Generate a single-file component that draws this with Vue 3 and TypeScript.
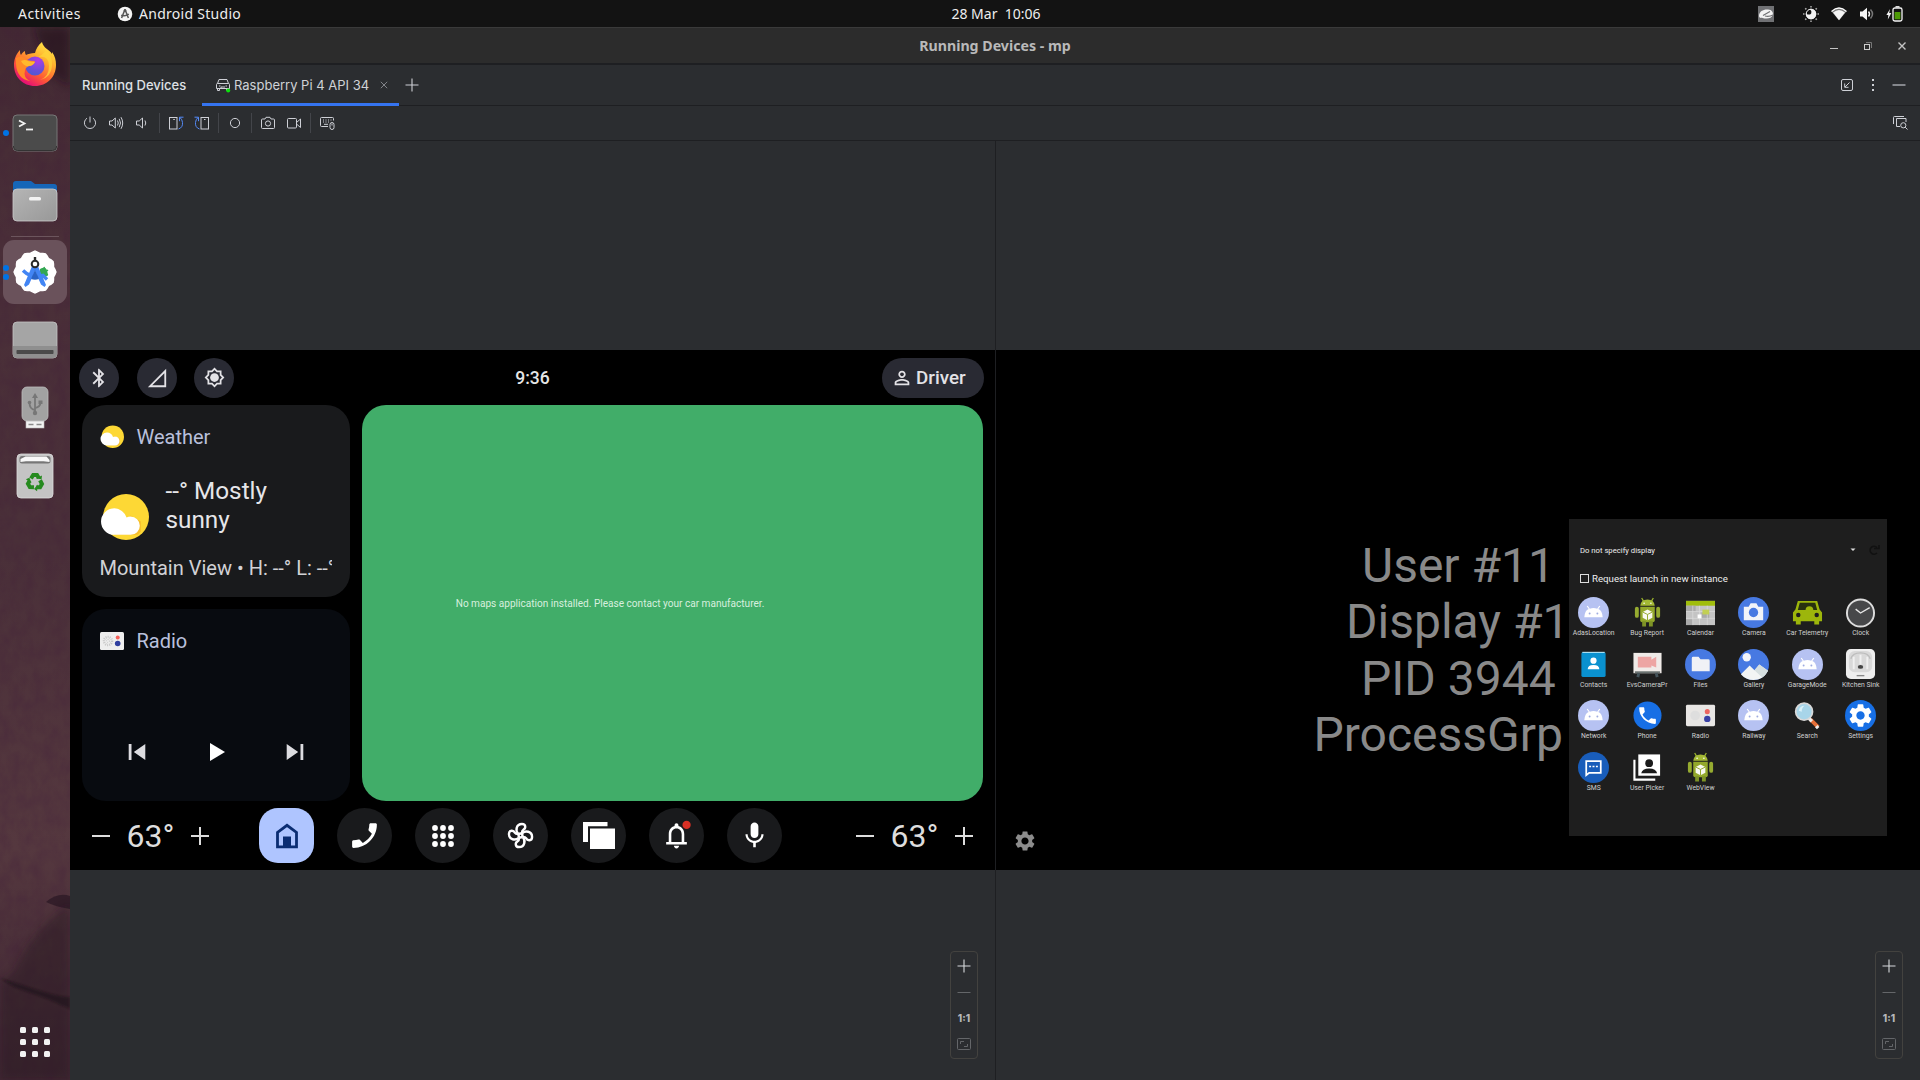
<script setup lang="ts">
interface LauncherApp {
  name: string
  kind: string
}

const apps: LauncherApp[] = [
  { name: 'AdasLocation', kind: 'droid' },
  { name: 'Bug Report', kind: 'robot' },
  { name: 'Calendar', kind: 'calendar' },
  { name: 'Camera', kind: 'camera' },
  { name: 'Car Telemetry', kind: 'car' },
  { name: 'Clock', kind: 'clock' },
  { name: 'Contacts', kind: 'contacts' },
  { name: 'EvsCameraPr', kind: 'evs' },
  { name: 'Files', kind: 'files' },
  { name: 'Gallery', kind: 'gallery' },
  { name: 'GarageMode', kind: 'droid' },
  { name: 'Kitchen Sink', kind: 'sink' },
  { name: 'Network', kind: 'droid' },
  { name: 'Phone', kind: 'phone' },
  { name: 'Radio', kind: 'radio' },
  { name: 'Railway', kind: 'droid' },
  { name: 'Search', kind: 'search' },
  { name: 'Settings', kind: 'settings' },
  { name: 'SMS', kind: 'sms' },
  { name: 'User Picker', kind: 'user' },
  { name: 'WebView', kind: 'robot' },
]

const nav: string[] = ['home', 'call', 'apps', 'fan', 'windows', 'bell', 'mic']
const grid: number[] = [0, 1, 2, 3, 4, 5, 6, 7, 8]

// Outline of the scalloped launcher badge: radius alternates between crest and notch.
const badge: string = Array.from({ length: 48 }, (_, i) => {
  const a = (i / 48) * Math.PI * 2
  const r = 20.8 + 0.9 * Math.cos(a * 12)
  return `${(22 + r * Math.sin(a)).toFixed(2)},${(22 - r * Math.cos(a)).toFixed(2)}`
}).join(' ')

const gear =
  'M19.14 12.94c.04-.3.06-.61.06-.94 0-.32-.02-.64-.07-.94l2.03-1.58c.18-.14.23-.41.12-.61l-1.92-3.32c-.12-.22-.37-.29-.59-.22l-2.39.96c-.5-.38-1.03-.7-1.62-.94l-.36-2.54c-.04-.24-.24-.41-.48-.41h-3.84c-.24 0-.43.17-.47.41l-.36 2.54c-.59.24-1.13.57-1.62.94l-2.39-.96c-.22-.08-.47 0-.59.22L2.74 8.87c-.12.21-.08.47.12.61l2.03 1.58c-.05.3-.09.63-.09.94s.02.64.07.94l-2.03 1.58c-.18.14-.23.41-.12.61l1.92 3.32c.12.22.37.29.59.22l2.39-.96c.5.38 1.03.7 1.62.94l.36 2.54c.05.24.24.41.48.41h3.84c.24 0 .44-.17.47-.41l.36-2.54c.59-.24 1.13-.56 1.62-.94l2.39.96c.22.08.47 0 .59-.22l1.92-3.32c.12-.22.07-.47-.12-.61l-2.01-1.58zM12 15.6c-1.98 0-3.6-1.62-3.6-3.6s1.62-3.6 3.6-3.6 3.6 1.62 3.6 3.6-1.62 3.6-3.6 3.6z'
const handset =
  'M6.62 10.79c1.44 2.83 3.76 5.14 6.59 6.59l2.2-2.2c.27-.27.67-.36 1.02-.24 1.12.37 2.33.57 3.57.57.55 0 1 .45 1 1V20c0 .55-.45 1-1 1-9.39 0-17-7.61-17-17 0-.55.45-1 1-1h3.5c.55 0 1 .45 1 1 0 1.25.2 2.45.57 3.57.11.35.03.74-.25 1.02l-2.2 2.2z'
</script>

<template>
  <div class="desktop">
    <header class="topbar">
      <div class="top-left">
        <span class="activities">Activities</span>
        <svg class="as-mini" width="16" height="16" viewBox="0 0 16 16">
          <circle cx="8" cy="8" r="7.300" fill="#f4f4f4" />
          <path d="M8 3.400 4.600 12M8 3.400 11.400 12M4.200 9.200q3.800 1.600 7.600-1" fill="none" stroke="#555" stroke-width="1.500" />
          <circle cx="8" cy="4.600" r="1.300" fill="#555" />
        </svg>
        <span class="app-name">Android Studio</span>
      </div>
      <span class="clock">28 Mar&nbsp; 10:06</span>
      <div class="top-right">
        <svg class="tray-app" width="16" height="16" viewBox="0 0 16 16">
          <rect width="16" height="16" fill="#707174" />
          <path d="M1 10C1 5 6 3 10 3.500c4 .2 5.500 3 4.800 5.500C14 12 10 13 6.500 12.400 4 11.500 1.500 13 1 10z" fill="#f3f3f3" />
          <path d="M5 9.500 12 5.500M7 10q4 1 8-1" stroke="#707174" stroke-width="1.200" fill="none" />
        </svg>
        <svg class="tray-sun" width="18" height="18" viewBox="0 0 18 18">
          <circle cx="9" cy="9" r="5.200" fill="#f2f2f2" />
          <circle cx="6.800" cy="7" r="2.600" fill="#131313" />
          <circle cx="9" cy="9" r="4.800" fill="none" stroke="#f2f2f2" stroke-width="1" />
          <path d="M9 1v1.500M9 15.500V17M1 9h1.500M15.500 9H17M3.200 3.200l1.200 1.200M13.600 13.600l1.200 1.200M3.200 14.800l1.200-1.200M13.600 4.400l1.200-1.200" stroke="#aaa" stroke-width="1.500" />
        </svg>
        <svg class="tray-wifi" width="16" height="14" viewBox="0 0 16 14">
          <path d="M.5 4.500Q8-2.500 15.500 4.500L8 13.200z" fill="#777" />
          <path d="M.5 4.500Q8-2.500 15.500 4.500" fill="none" stroke="#fff" stroke-width="1.300" />
          <path d="M2 5.600Q8 .5 14 5.600L8 13.200z" fill="#f5f5f5" />
        </svg>
        <svg class="tray-vol" width="16" height="14" viewBox="0 0 16 14">
          <path d="M1 4.500h2.500L8 .8v12.400L3.500 9.500H1z" fill="#f5f5f5" />
          <path d="M9.500 4.500q2 2.500 0 5" stroke="#f5f5f5" stroke-width="1.400" fill="none" />
          <path d="M11.500 2.500q4 4.500 0 9" stroke="#777" stroke-width="1.500" fill="none" />
        </svg>
        <svg class="tray-bat" width="17" height="16" viewBox="0 0 17 16">
          <path d="M4 3 .4 9h2L1.800 13.500 5.300 7H3.200z" fill="#f5f5f5" />
          <rect x="7" y="2" width="9" height="13" rx="1.800" fill="#131313" stroke="#f5f5f5" stroke-width="1.300" />
          <path d="M9.500.8h4" stroke="#f5f5f5" stroke-width="1.400" />
          <rect x="8.600" y="6" width="5.800" height="7.300" fill="#4e9a06" />
        </svg>
      </div>
    </header>

    <div class="workspace">
      <aside class="dock">
        <svg class="rock" width="70" height="1053" viewBox="0 0 70 1053">
          <defs>
            <filter id="grain" x="0" y="0" width="100%" height="100%">
              <feTurbulence type="fractalNoise" baseFrequency=".09 .06" numOctaves="5" seed="8" />
              <feColorMatrix values="0 0 0 0 .05  0 0 0 0 .01  0 0 0 0 .04  1.300 0 0 0 -.42" />
            </filter>
            <filter id="soft"><feGaussianBlur stdDeviation="4" /></filter>
            <filter id="edge"><feGaussianBlur stdDeviation="1.200" /></filter>
          </defs>
          <rect width="70" height="1053" filter="url(#grain)" opacity=".35" />
          <path d="M34 0 70 0V60L50 46z" fill="#1d0f18" opacity=".5" filter="url(#soft)" />
          <path d="M46 875Q58 865 70 869V882Q56 880 46 875z" fill="#2b1824" opacity=".75" />
          <path d="M70 878C50 890 30 910 14 945L0 955v98h70z" fill="#24121e" opacity=".38" filter="url(#soft)" />
          <path d="M0 951Q28 960 44 965T70 970V982L48 972 14 960z" fill="#150b13" opacity=".5" filter="url(#edge)" />
        </svg>
        <div class="dock-items">
          <svg class="d-fox" width="44" height="46" viewBox="0 0 44 46">
            <defs>
              <linearGradient id="fx" x1=".9" y1="0" x2=".3" y2="1"><stop offset="0" stop-color="#fff44f" /><stop offset=".35" stop-color="#ffb52e" /><stop offset=".7" stop-color="#ff5a33" /><stop offset="1" stop-color="#e3087c" /></linearGradient>
              <radialGradient id="gl" cx=".65" cy=".2" r=".9"><stop offset="0" stop-color="#b43ae8" /><stop offset=".6" stop-color="#6a4fd8" /><stop offset="1" stop-color="#4a5bd0" /></radialGradient>
            </defs>
            <path d="M29 1c-4 3-6 7-7 11-4 0-7 1-9 2-1-1-1-3-1-4-2 1-3 2-4 4-1-1-1-3-1-5C2 14 1 20 1 24c0 12 9 21 21 21s21-9 21-21c0-5-1-9-4-13l0 2C37 9 30 7 29 1z" fill="url(#fx)" />
            <path d="M25 16q11-2 11 9t-9 14q12-3 12-16 0-9-6-13-4 4-8 6z" fill="#ffd43a" opacity=".75" />
            <circle cx="22" cy="25" r="9.500" fill="url(#gl)" />
            <path d="M3 17q5-4 11 2 4 1 8 1-2 5-6 5-4 2-4 4-2 8 5 11-13-2-14-17z" fill="#ff8a28" />
            <path d="M8 20q4-2 7 0 4 1 7 1-2 4-6 4-5 1-8-5z" fill="#ffb92d" />
          </svg>
          <div class="d-row d-term">
            <i class="dot"></i>
            <svg width="46" height="38" viewBox="0 0 46 38">
              <rect x="1" y="1" width="44" height="36" rx="4" fill="#4b4b4b" stroke="#777" />
              <path d="M1.500 32v1q0 3.500 4 3.500h35q4 0 4-3.500v-1" fill="none" stroke="#333" />
              <path d="m7 6.500 5.500 3L7 12.500" fill="none" stroke="#f3f3f3" stroke-width="1.800" /><path d="M14 15.500h7" stroke="#f3f3f3" stroke-width="1.800" />
            </svg>
          </div>
          <svg class="d-files" width="46" height="42" viewBox="0 0 46 42">
            <defs><linearGradient id="gr" x1="0" y1="0" x2="1" y2="1"><stop stop-color="#b5b5b5" /><stop offset="1" stop-color="#989898" /></linearGradient></defs>
            <path d="M1 13V4q0-3 3-3h15l4 3h19q3 0 3 3v8H1z" fill="#1666b8" />
            <rect x="1" y="9" width="44" height="32" rx="4" fill="url(#gr)" stroke="#ccc" stroke-width=".8" />
            <rect x="17" y="17" width="12" height="3.500" rx="1.500" fill="#f3f3f3" />
          </svg>
          <div class="dock-sep"></div>
          <div class="d-studio">
            <span class="twin"><i class="dot"></i><i class="dot"></i></span>
            <svg width="44" height="44" viewBox="0 0 44 44">
              <polygon :points="badge" fill="#fff" />
              <path d="M27 19q5-3 7 1l1 5q-4 4-8 2z" fill="#34a853" /><path d="m31 17 1 3M35 20l-3 2M35 25l-3-1" stroke="#34a853" stroke-width="1.500" />
              <path d="M10 20.500q8 8 20 5l4 4" fill="none" stroke="#4285f4" stroke-width="3.400" />
              <path d="M19.500 15h5L33 35l-1.500 2-3.500-2.500L22 21l-6 13.500-3.500 2.500-1.500-2z" fill="#4285f4" />
              <path d="m22 20 4 9q-4 1.500-8 0z" fill="#2a63c4" />
              <circle cx="22" cy="14" r="3.300" fill="#fff" stroke="#292929" stroke-width="2" /><path d="M22 7v4" stroke="#292929" stroke-width="2.400" />
            </svg>
          </div>
          <svg class="d-drive" width="46" height="38" viewBox="0 0 46 38">
            <rect x="1" y="1" width="44" height="36" rx="4" fill="#a5a5a5" stroke="#c4c4c4" stroke-width=".8" />
            <path d="M1 25h44v8q0 4-4 4H5q-4 0-4-4z" fill="#8f8f8f" /><rect x="4.500" y="29" width="37" height="4" rx=".8" fill="#4a4a4a" />
          </svg>
          <svg class="d-usb" width="28" height="43" viewBox="0 0 28 43">
            <rect x="5" y="33" width="18" height="9" fill="#f2f2f2" stroke="#bbb" stroke-width=".6" /><path d="M7.500 38.500h5M15.500 38.500h5" stroke="#8a8a8a" stroke-width="1.600" />
            <rect x="1" y="1" width="26" height="34" rx="5" fill="#a2a2a2" stroke="#bdbdbd" stroke-width=".8" />
            <path d="M14 9v18M14 24q-5.500-1-5.500-7M14 22q5.500-1 5.500-6" stroke="#777" stroke-width="1.800" fill="none" /><path d="m14 7 3 5h-6z" fill="#777" /><circle cx="14" cy="27" r="2.200" fill="#777" /><circle cx="8.500" cy="16.500" r="1.800" fill="#777" /><path d="M17.500 14.500h4v3.500h-4z" fill="#777" />
          </svg>
          <svg class="d-trash" width="38" height="46" viewBox="0 0 38 46">
            <rect x="1" y="1" width="36" height="44" rx="4" fill="#c4c4c4" stroke="#ddd" stroke-width=".8" />
            <rect x="3.500" y="3" width="31" height="7.500" rx="2.500" fill="#777" /><path d="M4.500 9V6l5-2.500h21L33.500 7v2l-6-.8H10z" fill="#f8f8f8" />
            <g transform="translate(19 29)" fill="none" stroke="#268a1f" stroke-width="4">
              <g v-for="a in [0, 120, 240]" :key="a" :transform="`rotate(${a})`"><path d="M-4-3.500-1.800-7H2L3.800-4" /><path d="m1-3.500 5.500.800L7-6.500z" fill="#268a1f" stroke="none" /></g>
            </g>
          </svg>
          <div class="app-grid"><i v-for="n in grid" :key="n"></i></div>
        </div>
      </aside>

      <main class="window">
        <div class="titlebar">
          <span class="title">Running Devices - mp</span>
          <div class="win-controls">
            <svg width="10" height="10" viewBox="0 0 10 10"><path d="M1 7.500h8" stroke="#c4c4c4" /></svg>
            <svg width="10" height="10" viewBox="0 0 10 10"><path d="M3 1.500h5.500V7" fill="none" stroke="#777" /><rect x="1.500" y="3.500" width="5" height="5" fill="none" stroke="#ccc" /></svg>
            <svg width="10" height="10" viewBox="0 0 10 10"><path d="m1.500 1.500 7 7M8.500 1.500l-7 7" stroke="#c4c4c4" stroke-width="1.400" /></svg>
          </div>
        </div>
        <div class="tabs">
          <span class="tool-name">Running Devices</span>
          <div class="tab">
            <svg width="16" height="16" viewBox="0 0 16 16" fill="none" stroke="#ced0d6">
              <path d="M2.500 6.500 4 2.500h8l1.500 4M1.500 7.500q0-1 1-1h11q1 0 1 1v4h-13zM2.500 11.500v2h2v-2M11.500 11.500v2M4 9h1.500M10.500 9H12M6 11.500V10h4" /><circle cx="13.200" cy="13.500" r="2" fill="#0ce00c" stroke="none" />
            </svg>
            <span>Raspberry Pi 4 API 34</span>
            <svg class="x" width="8" height="8" viewBox="0 0 8 8"><path d="m.8.8 6.400 6.400M7.200.8.8 7.200" stroke="#83858a" /></svg>
          </div>
          <svg class="plus" width="14" height="14" viewBox="0 0 14 14"><path d="M7 .5v13M.5 7h13" stroke="#ced0d6" stroke-width="1.100" /></svg>
          <div class="tab-tools">
            <svg width="14" height="14" viewBox="0 0 14 14" fill="none" stroke="#ced0d6"><rect x="1.500" y="1.500" width="11" height="11" rx="1.500" /><path d="M9.500 4.500 5 9M4.700 5.500v3.800h3.800" /></svg>
            <svg width="4" height="14" viewBox="0 0 4 14" fill="#ced0d6"><rect x="1" y="1" width="2" height="2" /><rect x="1" y="6" width="2" height="2" /><rect x="1" y="11" width="2" height="2" /></svg>
            <svg width="14" height="14" viewBox="0 0 14 14"><path d="M.5 7h13" stroke="#85878c" stroke-width="2" /></svg>
          </div>
        </div>
        <div class="toolbar">
          <svg class="tb first" viewBox="0 0 16 16"><path d="M5 3.200a5.600 5.600 0 1 0 6 0M8 1.500v6" /></svg>
          <svg class="tb" viewBox="0 0 16 16"><path d="M1.500 6H4l3.300-3v10L4 10H1.500zM9.500 5.500q1.500 2.500 0 5M11.200 3.800q2.600 4.200 0 8.400M13 2.200q3.400 5.800 0 11.600" /></svg>
          <svg class="tb" viewBox="0 0 16 16"><path d="M2.500 6h2.700l3.300-3v10L5.200 10H2.500zM11 5.500q1.500 2.500 0 5" /></svg>
          <i class="vsep wide"></i>
          <svg class="tb" viewBox="0 0 16 16"><rect x="1.500" y="2.500" width="7.500" height="11.500" /><path d="M5.300 4.500h1.500" /><path class="blue" d="M10.500 14q4.500-1.500 4-6.500-.2-3-2.500-5M15.500 2.200h-4v4" /></svg>
          <svg class="tb" viewBox="0 0 16 16"><rect x="7" y="2.500" width="7.500" height="11.500" /><path d="M10 4.500h1.500" /><path class="blue" d="M5.500 14Q1 12.500 1.500 7.500q.2-3 2.500-5M.5 2.200h4v4" /></svg>
          <i class="vsep"></i>
          <svg class="tb" viewBox="0 0 16 16"><circle cx="8" cy="8" r="4.600" /></svg>
          <i class="vsep"></i>
          <svg class="tb" viewBox="0 0 16 16"><path d="M1.500 5q0-1 1-1H5l1-1.700h4L11 4h2.500q1 0 1 1v7.500q0 1-1 1h-11q-1 0-1-1z" /><circle cx="8" cy="8.500" r="2.600" /></svg>
          <svg class="tb" viewBox="0 0 16 16"><rect x="1.500" y="3.500" width="9" height="9.500" rx="1" /><path d="m10.500 7.500 4-3.500v8.500l-4-3.500" /></svg>
          <i class="vsep"></i>
          <svg class="tb" viewBox="0 0 16 16"><path d="M9 11.500H2.500q-1 0-1-1v-7q0-1 1-1h11q1 0 1 1v2M4 5h1M6.500 5h1M9 5h1M11.500 5h1M4 7h1M6.500 7h1M9 7h1M5 9.300h4" /><rect x="11" y="7.500" width="4" height="7" rx="2" /><path d="M13 8.500v2" /></svg>
          <svg class="tb inspect" viewBox="0 0 16 16"><path d="M1.500 9V2.500q0-1 1-1H12M8 11.500H4.500v-8H14V7" /><circle cx="11.300" cy="10.300" r="2.600" /><path d="m13.200 12.200 2.300 2.300" /></svg>
        </div>

        <div class="displays">
          <section class="panel left-panel">
            <div class="screen cluster">
              <div class="status">
                <div class="status-icons">
                  <span class="round"><svg width="22" height="22" viewBox="0 0 24 24"><path d="M17.710 7.710 12 2h-1v7.590L6.410 5 5 6.410 10.590 12 5 17.590 6.410 19 11 14.410V22h1l5.710-5.710-4.300-4.290zM13 5.830l1.880 1.880L13 9.590zm1.880 10.460L13 18.170v-3.760z" /></svg></span>
                  <span class="round"><svg width="22" height="22" viewBox="0 0 24 24"><path d="M2 22h20V2zm18-2H6.830L20 6.830z" /></svg></span>
                  <span class="round"><svg width="21" height="21" viewBox="0 0 24 24"><path d="M20 8.690V4h-4.690L12 .69 8.690 4H4v4.690L.69 12 4 15.310V20h4.690L12 23.310 15.310 20H20v-4.690L23.310 12zm-2 5.790V18h-3.520L12 20.480 9.520 18H6v-3.520L3.520 12 6 9.520V6h3.520L12 3.520 14.480 6H18v3.520L20.480 12z" /><circle cx="12" cy="12" r="5" /></svg></span>
                </div>
                <span class="car-time">9:36</span>
                <div class="driver">
                  <svg width="22" height="22" viewBox="0 0 24 24"><path d="M12 5.900c1.160 0 2.100.94 2.100 2.100s-.94 2.100-2.100 2.100S9.900 9.160 9.900 8s.94-2.100 2.100-2.100m0 9c2.970 0 6.100 1.460 6.100 2.100v1.100H5.900V17c0-.64 3.130-2.100 6.100-2.100M12 4C9.790 4 8 5.790 8 8s1.790 4 4 4 4-1.790 4-4-1.790-4-4-4zm0 9c-2.670 0-8 1.340-8 4v3h16v-3c0-2.660-5.330-4-8-4z" /></svg>
                  <span>Driver</span>
                </div>
              </div>

              <div class="cards">
                <div class="side-cards">
                  <div class="card weather">
                    <div class="card-head">
                      <svg width="24" height="24" viewBox="0 0 48 48"><use href="#cloudy" /></svg>
                      <span>Weather</span>
                    </div>
                    <div class="forecast">
                      <svg width="49" height="49" viewBox="0 0 48 48">
                        <g id="cloudy"><circle cx="25.500" cy="23.500" r="22.500" fill="#fdd835" /><path d="M14 41h23l3-3v-10L30 22z" fill="#f6bd2b" /><path d="M14 15a13 13 0 0 1 12 9q2-1 4-1a9 9 0 0 1 0 18H14A13 13 0 0 1 14 15z" fill="#fff" /></g>
                      </svg>
                      <p>--° Mostly<br />sunny</p>
                    </div>
                    <div class="place">Mountain View • H: --° L: --°</div>
                  </div>
                  <div class="card radio">
                    <div class="card-head">
                      <svg width="24" height="18" viewBox="0 0 24 18"><rect width="24" height="18" rx="1.500" fill="#eee" /><circle cx="8" cy="9" r="4" fill="none" stroke="#c8c8c8" stroke-width="2.500" stroke-dasharray="1 1" /><circle cx="8" cy="9" r="1.500" fill="none" stroke="#c8c8c8" stroke-dasharray="1 1" /><circle cx="17.700" cy="5.500" r="2" fill="#f4605a" /><circle cx="17.700" cy="11.500" r="2.800" fill="#303f9f" /></svg>
                      <span>Radio</span>
                    </div>
                    <div class="player">
                      <svg width="18" height="18" viewBox="0 0 18 18"><path d="M.7 1h2.800v16H.7zM17.300 1v16L5.800 9z" fill="#dcdce0" /></svg>
                      <svg class="play" width="18" height="20" viewBox="0 0 18 20"><path d="M2 1 17 10 2 19z" fill="#fff" /></svg>
                      <svg width="18" height="18" viewBox="0 0 18 18"><path d="M14.500 1h2.800v16h-2.800zM.7 1v16L12.200 9z" fill="#dcdce0" /></svg>
                    </div>
                  </div>
                </div>
                <div class="map"><span>No maps application installed. Please contact your car manufacturer.</span></div>
              </div>

              <div class="navbar">
                <div class="temp">
                  <svg width="18" height="18" viewBox="0 0 18 18"><path d="M0 9h18" /></svg>
                  <span>63°</span>
                  <svg width="18" height="18" viewBox="0 0 18 18"><path d="M0 9h18M9 0v18" /></svg>
                </div>
                <div class="nav-items">
                  <span v-for="n in nav" :key="n" class="nav" :class="n">
                    <svg v-if="n === 'home'" width="24" height="26" viewBox="0 0 24 26"><path d="M2.500 23.800V9.500L12 2.300l9.500 7.200v14.300z" fill="none" stroke="#0b2d72" stroke-width="2.800" /><path d="M8 24V13.500h8V24z" fill="#0b2d72" /></svg>
                    <svg v-else-if="n === 'call'" width="33" height="33" viewBox="0 0 24 24"><path :d="handset" transform="matrix(-1 0 0 1 24 0)" fill="#fff" /></svg>
                    <svg v-else-if="n === 'apps'" width="22" height="22" viewBox="0 0 22 22"><circle v-for="i in grid" :key="i" :cx="3 + (i % 3) * 8" :cy="3 + Math.floor(i / 3) * 8" r="2.900" fill="#fff" /></svg>
                    <svg v-else-if="n === 'fan'" width="27" height="27" viewBox="-14 -14 28 28" fill="none" stroke="#fff" stroke-width="2.500"><path v-for="a in [0, 90, 180, 270]" :key="a" :transform="`rotate(${a})`" d="M-2.500-2C-5.500-5-4.500-12 1.500-12 6-12 5.500-7 3-6 1.500-5 1.500-4 1.500-2.500" /><circle r="2" /></svg>
                    <svg v-else-if="n === 'windows'" width="32" height="27" viewBox="0 0 32 27"><path d="M0 0h24.500v4.200H5V20H0z" fill="#fff" /><path d="M7 6.500h25V27H7z" fill="#fff" /></svg>
                    <svg v-else-if="n === 'bell'" width="31" height="31" viewBox="0 0 24 24"><path d="M12 22c1.100 0 2-.9 2-2h-4c0 1.100.9 2 2 2zm6-5v-6c0-3.070-1.630-5.640-4.500-6.320V4c0-.83-.67-1.500-1.500-1.500s-1.500.67-1.500 1.500v.68C7.640 5.360 6 7.920 6 11v6H4v2h16v-2zm-2 0H8v-6c0-2.480 1.510-4.500 4-4.500s4 2.020 4 4.500z" fill="#fff" /><circle cx="19.800" cy="3.800" r="3.200" fill="#d93025" /></svg>
                    <svg v-else width="31" height="31" viewBox="0 0 24 24"><path d="M12 14c1.660 0 3-1.340 3-3V5c0-1.660-1.340-3-3-3S9 3.340 9 5v6c0 1.660 1.340 3 3 3zm5.300-3c0 3-2.540 5.100-5.300 5.100S6.700 14 6.700 11H5c0 3.410 2.720 6.230 6 6.720V21h2v-3.280c3.280-.48 6-3.300 6-6.720z" fill="#fff" /></svg>
                  </span>
                </div>
                <div class="temp">
                  <svg width="18" height="18" viewBox="0 0 18 18"><path d="M0 9h18" /></svg>
                  <span>63°</span>
                  <svg width="18" height="18" viewBox="0 0 18 18"><path d="M0 9h18M9 0v18" /></svg>
                </div>
              </div>
            </div>
            <div class="zoom">
              <svg width="14" height="14" viewBox="0 0 14 14"><path d="M7 .5v13M.5 7h13" stroke="#d8dadd" stroke-width="1.100" /></svg>
              <svg width="14" height="14" viewBox="0 0 14 14"><path d="M.5 7.500h13" stroke="#646669" /></svg>
              <span>1:1</span>
              <svg width="14" height="12" viewBox="0 0 14 12" fill="none" stroke="#646669"><rect x=".5" y=".5" width="13" height="11" rx="1" /><path d="M3.500 6V3.500H7M7 8.500h3.500V6" /></svg>
            </div>
          </section>

          <section class="panel right-panel">
            <div class="screen secondary">
              <div class="user-info">
                <div class="l1">User #11</div>
                <div class="l2">Display #1</div>
                <div class="l3">PID 3944</div>
                <div class="l4">ProcessGrp</div>
              </div>
              <svg class="cog" width="24" height="24" viewBox="0 0 24 24"><path :d="gear" fill="#8c8c8c" /></svg>
              <div class="launcher">
                <div class="spinner">
                  <span>Do not specify display</span>
                  <svg width="36" height="12" viewBox="0 0 36 12"><path d="M3.500 4.500h5L6 7z" fill="#ddd" /><path d="M30 3.500a4 4 0 1 0 0 5.500M27 4.500h5V1" fill="none" stroke="#111" stroke-width="1.500" /></svg>
                </div>
                <div class="check"><i></i><span>Request launch in new instance</span></div>
                <div class="app-list">
                  <div v-for="app in apps" :key="app.name" class="app">
                    <svg width="31" height="31" viewBox="0 0 32 32">
                      <template v-if="app.kind === 'droid'"><circle cx="16" cy="16" r="16" fill="#b6c2f2" /><path d="M6.500 21Q7 14 11 12.500L9 9.500l1-.5 2.200 3q3.800-1.300 7.600 0L22 9l1 .5-2 3q4 1.500 4.500 8.500z" fill="#fff" /><circle cx="12" cy="17" r="1" fill="#9eabe0" /><circle cx="20" cy="17" r="1" fill="#9eabe0" /></template>
                      <template v-else-if="app.kind === 'robot'">
                        <path d="m10 1 2 3.500M22 1l-2 3.500" stroke="#9db62d" stroke-width="1.300" /><path d="M8.500 9q.8-6.500 7.500-6.500T23.500 9z" fill="#a4b935" /><path d="M8.500 10h15v14q0 2-2 2H10.500q-2 0-2-2z" fill="#93a82b" /><rect x="3" y="10" width="4" height="11.500" rx="2" fill="#96ab30" /><rect x="25" y="10" width="4" height="11.500" rx="2" fill="#96ab30" /><path d="M10.500 25h4v5.500h-4zM17.500 25h4v5.500h-4z" fill="#7e9326" /><path d="m16 13 5 2.500v6L16 24l-5-2.500v-6z" fill="#f8f8f0" /><path d="m11 15.500 5 2.500 5-2.500M16 18v6" stroke="#93a82b" fill="none" /><circle cx="12.500" cy="6.500" r=".8" fill="#fff" /><circle cx="19.500" cy="6.500" r=".8" fill="#fff" />
                      </template>
                      <template v-else-if="app.kind === 'calendar'"><path d="M1 4h30v25H1z" fill="#c4c4c4" /><path d="M1 4h30v5H1z" fill="#a0bd0c" /><path d="M1 9h10v6H1zM17 16h8v7h-8zM1 23h7v6H1z" fill="#aaa" /><path d="M8 9v20M15 9v20M23 9v20M1 15h30M1 22h30" stroke="#ddd" stroke-width=".7" /><path d="M18 13h7v5h-7z" fill="#c2cf54" /><path d="M13 18h4v4h-4z" fill="#fff" /></template>
                      <template v-else-if="app.kind === 'camera'"><circle cx="16" cy="16" r="16" fill="#4779e2" /><path d="M6 10h5l2-3.500h6l2 3.500h5v14H6z" fill="#f2f4f9" /><circle cx="16" cy="16" r="4.800" fill="#4779e2" /></template>
                      <template v-else-if="app.kind === 'car'"><path d="M6 4h20l2.500 9 2.500 3v9h-3v3.500h-5V25H9v3.500H4V25H1v-9l2.500-3z" fill="#9db60b" /><path d="M8 6h16l2 7.500h-4q0-4-4-4t-4 4H6z" fill="#28310f" /><circle cx="6.500" cy="18.500" r="2.300" fill="#1e1e1e" /><circle cx="25.500" cy="18.500" r="2.300" fill="#1e1e1e" /></template>
                      <template v-else-if="app.kind === 'clock'"><circle cx="16" cy="16.500" r="14" fill="#47484a" stroke="#ddd" stroke-width="2" /><path d="m11 12.500 5 4 9.500-5.500" fill="none" stroke="#e8e8e8" stroke-width="1.400" /></template>
                      <template v-else-if="app.kind === 'contacts'"><rect x="3.500" y="3" width="25" height="26" rx="2" fill="#0a91cf" /><path d="M4.500 3.500h23" stroke="#aee1f3" stroke-width="1.200" /><circle cx="16" cy="12" r="3.200" fill="#fff" /><path d="M10 21q0-4.500 6-4.500t6 4.500z" fill="#fff" /></template>
                      <template v-else-if="app.kind === 'evs'"><path d="M1.500 4h29v21h-29z" fill="#f0ebe8" /><path d="M6 8h14v3l5-3v11l-5-2v2H6z" fill="#eda5a3" /><path d="M3 24h26" stroke="#6a7170" stroke-width="2" /><path d="m7 25-1 4M25 25l1 4" stroke="#45545b" stroke-width="3" /></template>
                      <template v-else-if="app.kind === 'files'"><circle cx="16" cy="16" r="16" fill="#4779e2" /><path d="M7 9.500q0-1.500 1.500-1.500H14l2 2.500h8q1.500 0 1.500 1.500v11H7z" fill="#f0f1f6" /></template>
                      <template v-else-if="app.kind === 'gallery'"><circle cx="16" cy="16" r="16" fill="#4779e2" /><circle cx="9" cy="8.500" r="4.300" fill="#f2f4f9" /><path d="m3 26 9-9 5 5 5-6 9 6.500Q26 32 16 32 8 32 3 26z" fill="#f2f4f4" /><path d="m17 22 5-6 9 6.500Q28 28 25 29.500z" fill="#d6dfe0" /></template>
                      <template v-else-if="app.kind === 'sink'"><rect x="1" y="0" width="30" height="31" rx="5" fill="#eee" /><rect x="4" y="2" width="24" height="22" rx="6" fill="#d9d9d9" /><path d="M6 10Q8 4 16 4t10 6" stroke="#bdbdbd" stroke-width="1.500" fill="none" /><path d="M9 8v13M16 6v10M23 8v13" stroke="#f0f0f0" stroke-width="2" /><ellipse cx="16" cy="18.500" rx="2.800" ry="2" fill="#444" /><path d="M12 27.500h8" stroke="#888" stroke-width="1.400" /></template>
                      <template v-else-if="app.kind === 'phone'"><circle cx="16" cy="16" r="14.500" fill="#176fe5" /><path :d="handset" transform="translate(4.500 4.500) scale(.96)" fill="#fff" /></template>
                      <template v-else-if="app.kind === 'radio'"><rect x="1" y="5" width="30" height="22" rx="1.500" fill="#e8e6e4" /><circle cx="10.500" cy="16" r="5" fill="#dedede" /><circle cx="23" cy="12" r="2.600" fill="#ed6560" /><circle cx="23" cy="19.500" r="3.300" fill="#3940a5" /></template>
                      <template v-else-if="app.kind === 'search'"><path d="m19 20 8 8" stroke="#e56f38" stroke-width="4" /><path d="m17.500 19 3 3M25 27l2 2" stroke="#eee" stroke-width="3.500" /><circle cx="12.500" cy="12" r="8.700" fill="#a8d5e9" stroke="#d9d9d9" stroke-width="1.800" /><path d="M7 11q1-5 6-5-3 2-3 6z" fill="#daf2fa" /></template>
                      <template v-else-if="app.kind === 'settings'"><circle cx="16" cy="16" r="16" fill="#176fe5" /><path :d="gear" transform="translate(1.600 1.600) scale(1.200)" fill="#fff" /></template>
                      <template v-else-if="app.kind === 'sms'"><circle cx="16" cy="16" r="16" fill="#195dba" /><path d="M8.500 9.500h15v12h-12l-3 2.500z" fill="none" stroke="#fff" stroke-width="1.800" /><path d="M11.500 15h2M15 15h2M18.500 15h2" stroke="#fff" stroke-width="1.700" /></template>
                      <template v-else><path d="M6.500 2.500H29v22H6.500z" fill="#fff" /><path d="M2.500 8v20.500H24" fill="none" stroke="#fff" stroke-width="2.200" /><circle cx="17.700" cy="11.500" r="4" fill="#1a1a1a" /><path d="M9.500 22q1-5 8.200-5t8.200 5z" fill="#1a1a1a" /></template>
                    </svg>
                    <span>{{ app.name }}</span>
                  </div>
                </div>
              </div>
            </div>
            <div class="zoom">
              <svg width="14" height="14" viewBox="0 0 14 14"><path d="M7 .5v13M.5 7h13" stroke="#d8dadd" stroke-width="1.100" /></svg>
              <svg width="14" height="14" viewBox="0 0 14 14"><path d="M.5 7.500h13" stroke="#646669" /></svg>
              <span>1:1</span>
              <svg width="14" height="12" viewBox="0 0 14 12" fill="none" stroke="#646669"><rect x=".5" y=".5" width="13" height="11" rx="1" /><path d="M3.500 6V3.500H7M7 8.500h3.500V6" /></svg>
            </div>
          </section>
        </div>
      </main>
    </div>
  </div>
</template>

<style>
body { margin: 0; background: #131313; overflow: hidden; }
</style>

<style scoped>
* { box-sizing: border-box; }
svg { display: block; flex: none; }
.desktop { width: 1920px; height: 1080px; display: flex; flex-direction: column; overflow: hidden; color: #f2f2f2; font-family: "Noto Sans", "Open Sans", sans-serif; white-space: nowrap; }
.topbar { height: 27px; flex: none; display: grid; grid-template-columns: 1fr auto 1fr; align-items: center; background: #131313; font-size: 14px; color: #eee; }
.top-left { display: flex; align-items: center; }
.activities { margin-left: 18px; width: 99px; letter-spacing: .45px; }
.app-name { margin-left: 6px; letter-spacing: .28px; }
.clock { padding-left: 72px; }
.top-right { display: flex; align-items: center; justify-content: flex-end; padding-right: 17px; }
.tray-app { margin-right: 28px; }
.tray-sun { margin-right: 11px; }
.tray-wifi { margin-right: 12px; }
.tray-vol { margin-right: 11px; }
.workspace { flex: 1; display: flex; min-height: 0; }

.dock { width: 70px; flex: none; display: grid; background: linear-gradient(#432a33, #4a2f38 20%, #4a3039 50%, #55383f 78%, #4c313a 86%, #412833 100%); }
.rock, .dock-items { grid-area: 1 / 1; }
.dock-items { position: relative; display: flex; flex-direction: column; align-items: center; height: 1053px; }
.d-fox { margin-top: 14px; }
.dot { display: block; width: 6px; height: 6px; border-radius: 50%; background: #0073e5; }
.d-row { width: 70px; display: flex; align-items: center; margin-top: 27px; padding-left: 3px; gap: 3px; }
.d-files { margin-top: 28px; }
.dock-sep { width: 48px; height: 1px; background: #6c555d; margin-top: 14px; }
.d-studio { width: 64px; height: 64px; border-radius: 11px; background: #6a525b; margin-top: 3px; display: flex; align-items: center; }
.twin { display: flex; flex-direction: column; gap: 3px; margin-right: 4px; }
.d-drive { margin-top: 17px; }
.d-usb { margin-top: 27px; }
.d-trash { margin-top: 24px; }
.app-grid { margin-top: auto; margin-bottom: 23px; display: grid; grid-template-columns: repeat(3, 6px); gap: 6px; }
.app-grid i { height: 6px; border-radius: 1.500px; background: #f2f2f2; }

.window { flex: 1; display: flex; flex-direction: column; background: #2b2d30; min-width: 0; }
.titlebar { height: 38px; flex: none; display: grid; grid-template-columns: 1fr auto 1fr; align-items: center; background: #2c2c2c; border-top: 1px solid #3a3a3a; border-bottom: 2px solid #1e1f22; }
.title { grid-column: 2; font-weight: 700; font-size: 14.200px; color: #b9b9b9; }
.win-controls { display: flex; justify-content: flex-end; gap: 24px; padding-right: 13px; }
.tabs { height: 41px; flex: none; border-bottom: 1px solid #1e1f22; display: flex; align-items: center; font-family: Inter, sans-serif; font-size: 13px; color: #dfe1e5; }
.tool-name { margin-left: 12px; width: 120px; font-weight: 500; }
.tab { width: 197px; height: 41px; display: flex; align-items: center; padding-left: 13px; border-bottom: 3px solid #3574f0; padding-top: 3px; color: #d0d2d7; }
.tab span { margin-left: 3px; }
.tab .x { margin-left: 11px; }
.plus { margin-left: 6px; }
.tab-tools { margin-left: auto; display: flex; align-items: center; padding-right: 14px; gap: 17px; }
.toolbar { height: 35px; flex: none; border-bottom: 1px solid #1e1f22; display: flex; align-items: center; padding-left: 7px; }
.tb { width: 16px; height: 16px; margin: 0 5px; fill: none; stroke: #ced0d6; stroke-width: 1; }
.tb.first { margin-right: 4.500px; }
.blue { stroke: #548af7; }
.vsep { width: 1px; height: 20px; background: #43454a; margin: 0 3px; }
.vsep.wide { margin-left: 4px; }
.tb.inspect { margin-left: auto; margin-right: 12px; }

.displays { flex: 1; display: flex; min-height: 0; }
.panel { display: flex; flex-direction: column; padding-top: 209px; }
.left-panel { width: 926px; border-right: 1px solid #1e1f22; }
.right-panel { flex: 1; }
.screen { height: 520px; flex: none; background: #000; font-family: Roboto, sans-serif; }
.zoom { width: 28px; height: 108px; margin: 81px 17px 0 auto; border: 1px solid #43423f; border-radius: 4px; display: flex; flex-direction: column; align-items: center; padding-top: 7px; font-family: Inter, sans-serif; font-weight: 800; font-size: 10px; line-height: 12px; color: #b5b7ba; }
.zoom svg + svg { margin-top: 12px; }
.zoom span { margin-top: 13px; }
.zoom span + svg { margin-top: 14px; }

.status { height: 55px; display: grid; grid-template-columns: 1fr auto 1fr; align-items: center; padding: 0 11px 0 9px; }
.status-icons { display: flex; gap: 17.700px; }
.round { width: 40px; height: 40px; border-radius: 50%; background: #292a33; display: flex; align-items: center; justify-content: center; fill: #e3e2e6; }
.car-time { font-size: 17.500px; font-weight: 500; color: #e6e6e6; padding-left: 2px; }
.driver { justify-self: end; height: 40px; width: 102px; border-radius: 20px; background: #292a33; display: flex; align-items: center; padding-left: 9px; gap: 3px; font-size: 18.800px; font-weight: 500; color: #e3e2e6; fill: #e3e2e6; }
.cards { display: flex; gap: 12px; padding-left: 12px; height: 396px; }
.side-cards { width: 268px; display: flex; flex-direction: column; gap: 12px; }
.card { height: 192px; border-radius: 24px; padding: 0 18px 0 17.500px; overflow: hidden; }
.weather { background: #191a1c; }
.radio { background: #080b10; }
.card-head { display: flex; align-items: center; gap: 13px; height: 25px; margin-top: 19px; font-size: 20px; color: #b9c0dc; }
.forecast { display: flex; margin-top: 26px; color: #e6e6e9; }
.forecast svg { margin-top: 18px; }
.forecast p { margin: 1px 0 0 17px; font-size: 24.300px; line-height: 29px; }
.place { font-size: 20px; color: #d2d2d6; margin-top: 14px; overflow: hidden; line-height: 24px; }
.player { display: flex; justify-content: space-between; align-items: center; padding: 0 28px; margin-top: 89px; }
.play { margin-left: 2px; }
.map { width: 621px; height: 396px; border-radius: 24px; background: #41ad69; display: flex; justify-content: center; align-items: center; font-size: 10.080px; color: #d8efdf; padding-right: 125px; }
.navbar { height: 69px; display: flex; align-items: center; justify-content: space-between; padding: 0 22px; }
.temp { display: flex; align-items: center; width: 117px; justify-content: space-between; font-size: 32px; color: #ddd; }
.temp svg { stroke: #ddd; stroke-width: 2; }
.nav-items { display: flex; gap: 23px; margin-right: 24px; }
.nav { width: 55px; height: 55px; border-radius: 50%; background: #191a1c; display: flex; align-items: center; justify-content: center; }
.nav.home { background: #afc5ff; border-radius: 19px; }

.secondary { position: relative; }
.user-info { padding-top: 188px; font-size: 48px; line-height: 56.300px; color: #898989; }
.l1 { padding-left: 366px; }
.l2 { padding-left: 350px; }
.l3 { padding-left: 365px; }
.l4 { padding-left: 317.500px; }
.cog { margin: 66px 0 0 17px; }
.launcher { position: absolute; left: 573px; top: 169px; width: 318px; height: 317px; background: #1e1e1e; font-size: 7.700px; color: #eee; overflow: hidden; }
.spinner { display: flex; justify-content: space-between; align-items: center; height: 14px; margin: 24px 4px 0 11px; }
.check { display: flex; align-items: center; gap: 3px; height: 14px; margin: 14px 0 0 11px; font-size: 9.700px; }
.check i { width: 9px; height: 9px; border: 1px solid #ddd; }
.app-list { display: grid; grid-template-columns: repeat(6, 53.400px); grid-auto-rows: 51.500px; margin: 12px 0 0 -2px; }
.app { display: flex; flex-direction: column; align-items: center; }
.app span { font-size: 6.800px; line-height: 9px; margin-top: 1px; color: #d0d0d0; }
</style>
